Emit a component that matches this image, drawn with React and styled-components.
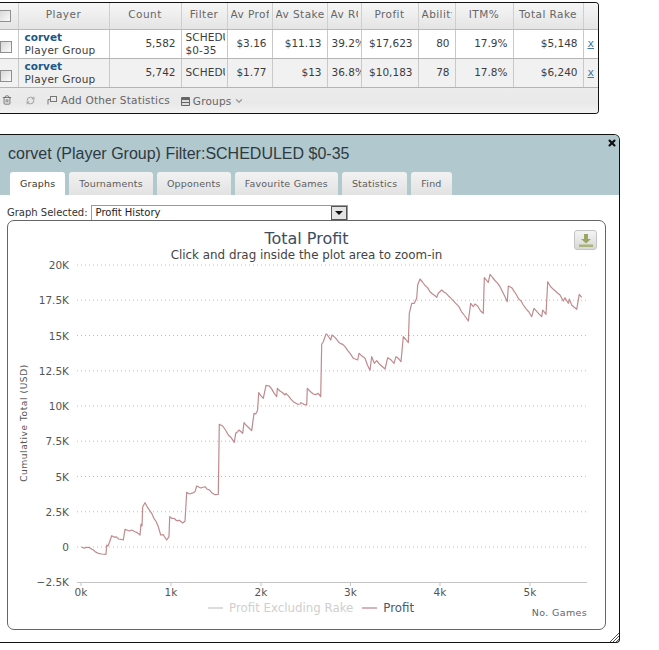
import React from "react";
import styled, { createGlobalStyle } from "styled-components";
import { Trash2, RefreshCw, X, ChevronDown } from "lucide-react";

const GlobalStyle = createGlobalStyle`
  html, body {
    margin: 0;
    padding: 0;
    background: #fff;
    overflow: hidden;
  }
  * {
    box-sizing: border-box;
  }
`;

const uiFont = `"DejaVu Sans", Verdana, sans-serif`;

const Page = styled.div`
  width: 659px;
  height: 650px;
  padding-top: 2px;
  font-family: ${uiFont};
  font-size: 10.5px;
  color: #444;
`;

/* top stats panel */
const Panel = styled.div`
  width: 599px;
  height: 112px;
  border: 1px solid #111;
  border-left: none;
  border-radius: 0 4px 4px 0;
  overflow: hidden;
  display: flex;
  flex-direction: column;
`;

const Table = styled.table`
  width: 598px;
  border-collapse: collapse;
  table-layout: fixed;
`;

const Th = styled.th`
  height: 26px;
  padding: 0 3px 3px;
  font-weight: normal;
  color: #666;
  text-align: center;
  white-space: nowrap;
  background: linear-gradient(#f6f6f6, #e4e4e4);
  border-right: 1px solid #cfcfcf;
  border-bottom: 1px solid #b9b9b9;
  &:last-child {
    border-right: none;
  }
`;

const HeadLabel = styled.div`
  overflow: hidden;
  letter-spacing: 0.45px;
`;

const Td = styled.td`
  height: 29px;
  padding: 0 5px 0 4px;
  line-height: 13px;
  color: #3c3c3c;
  text-align: ${(p) => (p.$left ? "left" : "right")};
  white-space: nowrap;
  overflow: hidden;
  background: ${(p) => (p.$alt ? "#f1f1f1" : "#fff")};
  border-right: 1px solid #c9c9c9;
  border-bottom: 1px solid #b4b4b4;
  &:last-child {
    border-right: none;
    padding: 0;
    text-align: center;
  }
`;

const Check = styled.span`
  display: block;
  width: 12px;
  height: 12px;
  margin: ${(p) => p.$drop}px 0 0 -4px;
  border: 1px solid #8f8f8f;
  background: linear-gradient(135deg, #d8d8d8, #fbfbfb);
`;

const PlayerCell = styled.div`
  padding-left: 2px;
  letter-spacing: 0.25px;
`;

const PlayerName = styled.a`
  display: block;
  font-weight: bold;
  letter-spacing: 0;
  color: #1d5788;
`;

const FilterLine = styled.div`
  margin-right: -3px;
  overflow: hidden;
  letter-spacing: 0.1px;
`;

const RemoveLink = styled.a`
  color: #3f7ba6;
  text-decoration: underline;
  font-size: 11px;
`;

const Footer = styled.div`
  flex: 1;
  display: flex;
  align-items: center;
  padding-left: 2px;
  color: #666;
  background: linear-gradient(#ececec, #e9e9e9 60%, #f2f2f2);
`;

const FooterItem = styled.span`
  display: flex;
  align-items: center;
  gap: 3px;
  margin-left: ${(p) => p.$gap}px;
  margin-top: ${(p) => p.$drop || 0}px;
  letter-spacing: 0.2px;
`;

/* profile dialog */
const Dialog = styled.div`
  position: relative;
  width: 620px;
  height: 509px;
  margin-top: 20px;
  border: 1px solid #111;
  border-left: none;
  border-radius: 0 6px 4px 0;
  background: #fff;
`;

const DialogHead = styled.div`
  height: 60px;
  padding: 10px 0 0 8px;
  background: #b1c8cf;
  border-radius: 0 5px 0 0;
  display: flex;
  flex-direction: column;
  justify-content: space-between;
`;

const DialogTitle = styled.div`
  font-family: "Liberation Sans", Arial, sans-serif;
  font-size: 16px;
  line-height: 18px;
  color: #2d3a40;
`;

const Tabs = styled.div`
  display: flex;
  gap: 4px;
  padding-left: 2px;
`;

const Tab = styled.div`
  height: 23px;
  padding: 0 10px;
  display: flex;
  align-items: center;
  border-radius: 3px 3px 0 0;
  font-size: 9.5px;
  letter-spacing: 0.2px;
  color: ${(p) => (p.$active ? "#333" : "#5c5c5c")};
  background: ${(p) => (p.$active ? "#fff" : "linear-gradient(#f2f2f2, #e2e2e2)")};
`;

const CloseButton = styled.span`
  position: absolute;
  top: 3px;
  right: 2px;
  display: flex;
  color: #111;
`;

const SelectRow = styled.div`
  height: 25px;
  padding: 10px 0 0 7px;
  display: flex;
  align-items: center;
  color: #333;
  font-size: 10px;
`;

const SelectBox = styled.div`
  width: 257px;
  height: 16px;
  margin-left: 3px;
  padding-left: 4px;
  display: flex;
  align-items: center;
  justify-content: space-between;
  border: 1px solid #9a9a9a;
  color: #222;
`;

const SelectArrow = styled.span`
  width: 16px;
  height: 14px;
  display: flex;
  align-items: center;
  justify-content: center;
  border: 1px solid #555;
  background: #e4e4e4;
  &::after {
    content: "";
    margin-top: 4px;
    border: 4px solid transparent;
    border-top: 4px solid #111;
  }
`;

const ChartCard = styled.div`
  position: relative;
  width: 599px;
  height: 410px;
  margin-left: 7px;
  border: 1px solid #666;
  border-radius: 7px;
`;

const ChartHead = styled.div`
  height: 40px;
  padding-top: 9px;
  text-align: center;
`;

const ChartTitle = styled.div`
  font-size: 16px;
  line-height: 18px;
  color: #3d4d5e;
`;

const ChartSubtitle = styled.div`
  font-size: 11.9px;
  line-height: 15px;
  color: #444;
`;

const DownloadButton = styled.span`
  position: absolute;
  top: 9px;
  right: 8px;
  width: 23px;
  height: 20px;
  display: flex;
  align-items: center;
  justify-content: center;
  border: 1px solid #c4c4c4;
  border-radius: 3px;
  background: linear-gradient(#f4f4f4, #d8d8d8);
`;

const PlotSvg = styled.svg`
  display: block;
`;

const AxisLabel = styled.text`
  font-family: ${uiFont};
  font-size: ${(p) => p.$size || 10.5}px;
  fill: #555;
`;

const LegendRow = styled.div`
  height: 20px;
  padding: 3px 18px 0 200px;
  display: flex;
  align-items: flex-end;
  justify-content: space-between;
`;

const Legend = styled.div`
  display: flex;
  gap: 9px;
  align-self: flex-start;
`;

const LegendItem = styled.span`
  display: flex;
  align-items: center;
  gap: 6px;
  font-size: 11.8px;
  color: ${(p) => (p.$off ? "#cfcfcf" : "#4a5a6c")};
  &::before {
    content: "";
    width: 15px;
    height: 2px;
    background: ${(p) => (p.$off ? "#dcdcdc" : "#d3b4bb")};
  }
`;

const AxisNote = styled.span`
  font-size: 9.5px;
  letter-spacing: 0.35px;
  color: #666;
`;

const Grip = styled.svg`
  position: absolute;
  right: 0;
  bottom: 0;
`;

const columns = [18, 91, 72, 46, 45, 55, 34, 57, 37, 58, 70, 15];
const headers = ["", "Player", "Count", "Filter", "Av Prof", "Av Stake", "Av ROI", "Profit", "Ability", "ITM%", "Total Rake", ""];
const rows = [
  { count: "5,582", filter: ["SCHEDULED", "$0-35"], avProf: "$3.16", stake: "$11.13", roi: "39.2%", profit: "$17,623", ability: "80", itm: "17.9%", rake: "$5,148" },
  { count: "5,742", filter: ["SCHEDULED"], avProf: "$1.77", stake: "$13", roi: "36.8%", profit: "$10,183", ability: "78", itm: "17.8%", rake: "$6,240" },
];
const tabs = ["Graphs", "Tournaments", "Opponents", "Favourite Games", "Statistics", "Find"];

// traced from crops of the chart, in crop pixels scaled 3x
const fromCrop = (ox, oy, pts) => pts.map(([x, y]) => [ox + x / 3, oy + y / 3]);
const traced = [
  ...fromCrop(70, 400, [[35, 441], [42, 445], [45, 443], [55, 442], [70, 450], [85, 460], [95, 462], [108, 463], [110, 435], [114, 438], [118, 428], [125, 407], [160, 420], [165, 388], [178, 393], [185, 390], [195, 395], [210, 405], [213, 372], [216, 378], [218, 320], [225, 308], [245, 340], [265, 380], [272, 405], [280, 404], [290, 420], [297, 410], [299, 350], [320, 362], [328, 361], [338, 369], [345, 364], [350, 277], [358, 282], [375, 275], [380, 258], [392, 264], [405, 260], [425, 278], [435, 284], [445, 283], [448, 73], [458, 78], [475, 105], [493, 127], [497, 100], [503, 95], [507, 90], [518, 100], [522, 68], [538, 85], [545, 92], [552, 40], [557, 42], [562, 33]]),
  ...fromCrop(70, 260, [[563, 445], [566, 398], [580, 415], [588, 376], [598, 378], [620, 410], [622, 385], [645, 405], [648, 400], [670, 425], [683, 433], [690, 432], [693, 428], [710, 435], [712, 385], [730, 402], [745, 400], [752, 410], [755, 253], [760, 245], [768, 222]]),
  ...fromCrop(320, 265, [[20, 207], [32, 225], [36, 210], [55, 230], [75, 245], [100, 280], [113, 285], [117, 265], [135, 280], [150, 316], [155, 275], [163, 295], [170, 287], [195, 312], [203, 278], [222, 295], [228, 275], [243, 290], [250, 215], [265, 233], [268, 145], [275, 115], [283, 115], [290, 100], [293, 60], [300, 42], [330, 80], [350, 97], [355, 85], [365, 75], [385, 92], [410, 118], [445, 168], [452, 115], [460, 125], [465, 117], [490, 145], [493, 38], [505, 52], [510, 28], [540, 65], [562, 110], [565, 63], [575, 68], [610, 120], [635, 155], [642, 130], [658, 148], [665, 155], [668, 135], [678, 148], [683, 50], [700, 73], [720, 90], [730, 108], [735, 98], [745, 115], [748, 102], [755, 120], [770, 133], [778, 88], [785, 97]]),
];

// the slopes are jagged in the picture, so roughen the longer segments a little
const roughen = (pts) => {
  const out = [pts[0]];
  pts.slice(1).forEach((p, i) => {
    const a = pts[i];
    const steps = Math.floor((p[0] - a[0]) / 2.2);
    for (let s = 1; s < steps; s++) {
      const t = s / steps;
      const wobble = Math.sin(out.length * 2.4) * 0.7 + Math.sin(out.length * 0.9) * 0.3;
      out.push([a[0] + (p[0] - a[0]) * t, a[1] + (p[1] - a[1]) * t + wobble]);
    }
    out.push(p);
  });
  return out;
};
const profitLine = roughen(traced);

const gridY = [20, 17.5, 15, 12.5, 10, 7.5, 5, 2.5, 0].map((v, i) => ({
  label: v === 0 ? "0" : `${v}K`,
  y: 265 + i * 35.25,
}));
const ticksX = [81, 171, 261, 350.5, 440, 530];

const Chart = () => (
  <PlotSvg width="597" height="337" viewBox="8 261 597 337">
    {gridY.map((g) => (
      <g key={g.label}>
        <line x1="77" x2="587" y1={g.y} y2={g.y} stroke="#bdbdbd" strokeDasharray="1 3" />
        <AxisLabel x="69" y={g.y + 4} textAnchor="end">{g.label}</AxisLabel>
      </g>
    ))}
    <AxisLabel x="69" y="586" textAnchor="end">−2.5K</AxisLabel>
    <line x1="77" x2="587" y1="582.5" y2="582.5" stroke="#c4c4c4" />
    {ticksX.map((x, i) => (
      <g key={x}>
        <line x1={x} x2={x} y1="582" y2="586" stroke="#c4c4c4" />
        <AxisLabel x={x} y="596" textAnchor="middle">{i}k</AxisLabel>
      </g>
    ))}
    <AxisLabel $size={9} x="0" y="0" letterSpacing="0.6" textAnchor="middle" transform="translate(27 423) rotate(-90)">
      Cumulative Total (USD)
    </AxisLabel>
    <polyline
      fill="none"
      stroke="#c08a8e"
      strokeWidth="1.2"
      strokeLinejoin="round"
      points={profitLine.map((p) => p.map((n) => n.toFixed(1)).join(",")).join(" ")}
    />
  </PlotSvg>
);

const WindowIcon = () => (
  <svg width="11" height="10" viewBox="0 0 11 10" fill="none" stroke="#777">
    <path d="M1 9.5V4.5H3" />
    <rect x="3.5" y="1.5" width="6" height="5" />
  </svg>
);

const GroupsIcon = () => (
  <svg width="9" height="9" viewBox="0 0 9 9">
    <rect width="9" height="9" rx="1" fill="#666" />
    <rect x="1" y="3" width="7" height="2" fill="#ddd" />
    <rect x="1" y="6" width="7" height="2" fill="#ddd" />
  </svg>
);

const App = () => {
  return (
    <Page>
      <GlobalStyle />
      <Panel>
        <Table>
          <colgroup>
            {columns.map((w, i) => (
              <col key={i} width={w} />
            ))}
          </colgroup>
          <thead>
            <tr>
              {headers.map((h, i) => (
                <Th key={i}>{i === 0 ? <Check $drop={4} /> : <HeadLabel>{h}</HeadLabel>}</Th>
              ))}
            </tr>
          </thead>
          <tbody>
            {rows.map((r, i) => (
              <tr key={r.count}>
                <Td $alt={i === 1} $left><Check $drop={6} /></Td>
                <Td $alt={i === 1} $left>
                  <PlayerCell>
                    <PlayerName>corvet</PlayerName>
                    Player Group
                  </PlayerCell>
                </Td>
                <Td $alt={i === 1}>{r.count}</Td>
                <Td $alt={i === 1} $left>
                  {r.filter.map((f) => (
                    <FilterLine key={f}>{f}</FilterLine>
                  ))}
                </Td>
                <Td $alt={i === 1}>{r.avProf}</Td>
                <Td $alt={i === 1}>{r.stake}</Td>
                <Td $alt={i === 1} $left>{r.roi}</Td>
                <Td $alt={i === 1}>{r.profit}</Td>
                <Td $alt={i === 1}>{r.ability}</Td>
                <Td $alt={i === 1}>{r.itm}</Td>
                <Td $alt={i === 1}>{r.rake}</Td>
                <Td $alt={i === 1}><RemoveLink>x</RemoveLink></Td>
              </tr>
            ))}
          </tbody>
        </Table>
        <Footer>
          <Trash2 size={10} color="#666" />
          <FooterItem $gap={14}><RefreshCw size={9} color="#888" /></FooterItem>
          <FooterItem $gap={12}><WindowIcon />Add Other Statistics</FooterItem>
          <FooterItem $gap={11} $drop={2}><GroupsIcon />Groups<ChevronDown size={10} color="#999" strokeWidth={3} /></FooterItem>
        </Footer>
      </Panel>

      <Dialog>
        <DialogHead>
          <DialogTitle>corvet (Player Group) Filter:SCHEDULED $0-35</DialogTitle>
          <Tabs>
            {tabs.map((t, i) => (
              <Tab key={t} $active={i === 0}>{t}</Tab>
            ))}
          </Tabs>
        </DialogHead>
        <CloseButton><X size={10} strokeWidth={5} /></CloseButton>
        <SelectRow>
          Graph Selected:
          <SelectBox>
            Profit History
            <SelectArrow />
          </SelectBox>
        </SelectRow>
        <ChartCard>
          <ChartHead>
            <ChartTitle>Total Profit</ChartTitle>
            <ChartSubtitle>Click and drag inside the plot area to zoom-in</ChartSubtitle>
          </ChartHead>
          <DownloadButton>
            <svg width="14" height="13" viewBox="0 0 14 13">
              <path d="M5 0h4v5h3L7 9.5 2 5h3z" fill="#9aa662" />
              <rect x="0" y="10.5" width="14" height="2.5" fill="#a9b37a" />
            </svg>
          </DownloadButton>
          <Chart />
          <LegendRow>
            <Legend>
              <LegendItem $off>Profit Excluding Rake</LegendItem>
              <LegendItem>Profit</LegendItem>
            </Legend>
            <AxisNote>No. Games</AxisNote>
          </LegendRow>
        </ChartCard>
        <Grip width="9" height="9" viewBox="0 0 9 9" stroke="#555">
          <path d="M0 9L9 0M3 9L9 3M6 9L9 6" />
        </Grip>
      </Dialog>
    </Page>
  );
};

export default App;
